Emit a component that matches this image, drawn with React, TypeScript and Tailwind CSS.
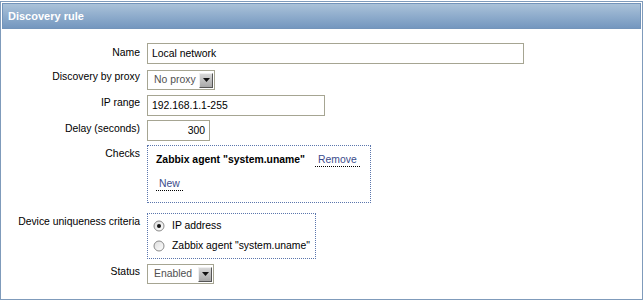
import React from "react";

const font = { fontFamily: '"Liberation Sans", Arial, sans-serif' };

function Arrow() {
  return (
    <span className="ml-auto mr-[1px] flex h-[15px] w-[14px] items-center justify-center border border-t-[#f0f0f0] border-l-[#f0f0f0] border-r-[#555] border-b-[#555] bg-gradient-to-b from-[#d8d8d8] to-[#a8a8a8]">
      <svg width="7" height="4" viewBox="0 0 7 4"><path d="M0 0h7L3.5 4z" fill="#111" /></svg>
    </span>
  );
}

function Select({ text, w }: { text: string; w: string }) {
  return (
    <div className={`flex h-[20px] items-center border border-[#a6a592] bg-white pl-[6px] text-[#505050] ${w}`}>
      <span>{text}</span>
      <Arrow />
    </div>
  );
}

function Radio({ checked }: { checked?: boolean }) {
  return (
    <svg width="12" height="12" viewBox="0 0 12 12">
      <defs>
        <linearGradient id="rg" x1="0" y1="0" x2="1" y2="1">
          <stop offset="0" stopColor="#dcdcdc" />
          <stop offset="1" stopColor="#ffffff" />
        </linearGradient>
      </defs>
      <circle cx="6" cy="6" r="5" fill="url(#rg)" stroke="#8a8a8a" strokeWidth="1" />
      {checked && <circle cx="6" cy="6" r="2" fill="#111" />}
    </svg>
  );
}

function Label({ children, pt }: { children: React.ReactNode; pt: string }) {
  return <div className={`w-[138px] shrink-0 text-right leading-[12px] ${pt}`}>{children}</div>;
}

export default function App() {
  return (
    <div className="h-[301px] w-[644px] bg-white" style={font}>
      <div className="mt-[1px] flex h-[299px] w-[643px] flex-col border border-[#7f9bbb] p-[1px] text-[10.4px] text-black">
        <div className="flex h-[26px] items-center border border-[#7394ba] bg-gradient-to-b from-[#aac2d9] to-[#7497bf] pl-[5px] text-[11px] font-bold text-white">
          Discovery rule
        </div>
        <div className="flex flex-col">
          <div className="mt-[14px] flex gap-[7px]">
            <Label pt="pt-[4px]">Name</Label>
            <div className="flex h-[21px] w-[377px] items-center border border-[#a6a592] pl-[4px]">Local network</div>
          </div>
          <div className="mt-[6px] flex gap-[7px]">
            <Label pt="pt-[1px]">Discovery by proxy</Label>
            <Select text="No proxy" w="w-[68px]" />
          </div>
          <div className="mt-[5px] flex gap-[7px]">
            <Label pt="pt-[2px]">IP range</Label>
            <div className="flex h-[21px] w-[178px] items-center border border-[#a6a592] pl-[4px]">192.168.1.1-255</div>
          </div>
          <div className="mt-[4px] flex gap-[7px]">
            <Label pt="pt-[3px]">Delay (seconds)</Label>
            <div className="flex h-[21px] w-[63px] items-center justify-end border border-[#a6a592] pr-[4px]">300</div>
          </div>
          <div className="mt-[4px] flex gap-[7px]">
            <Label pt="pt-[3px]">Checks</Label>
            <div className="flex h-[58px] w-[224px] flex-col border border-dotted border-[#5b76ad] pl-[8px] pt-[6px]">
              <div className="flex items-center">
                <span className="font-bold">Zabbix agent "system.uname"</span>
                <span className="ml-[10px] border-b border-dotted border-black px-[3px] leading-[13px] text-[#3b4c8c]">Remove</span>
              </div>
              <div className="mt-[9px] flex">
                <span className="border-b border-dotted border-black px-[3px] leading-[13px] text-[#3b4c8c]">New</span>
              </div>
            </div>
          </div>
          <div className="mt-[10px] flex gap-[7px]">
            <Label pt="pt-[3px]">Device uniqueness criteria</Label>
            <div className="flex h-[46px] w-[169px] flex-col justify-center gap-[4px] border border-dotted border-[#5b76ad] pl-[5px]">
              <div className="flex items-center gap-[7px]">
                <Radio checked />
                <span>IP address</span>
              </div>
              <div className="flex items-center gap-[7px]">
                <Radio />
                <span>Zabbix agent "system.uname"</span>
              </div>
            </div>
          </div>
          <div className="mt-[5px] flex gap-[7px]">
            <Label pt="pt-[2px]">Status</Label>
            <Select text="Enabled" w="w-[67px]" />
          </div>
        </div>
      </div>
    </div>
  );
}
